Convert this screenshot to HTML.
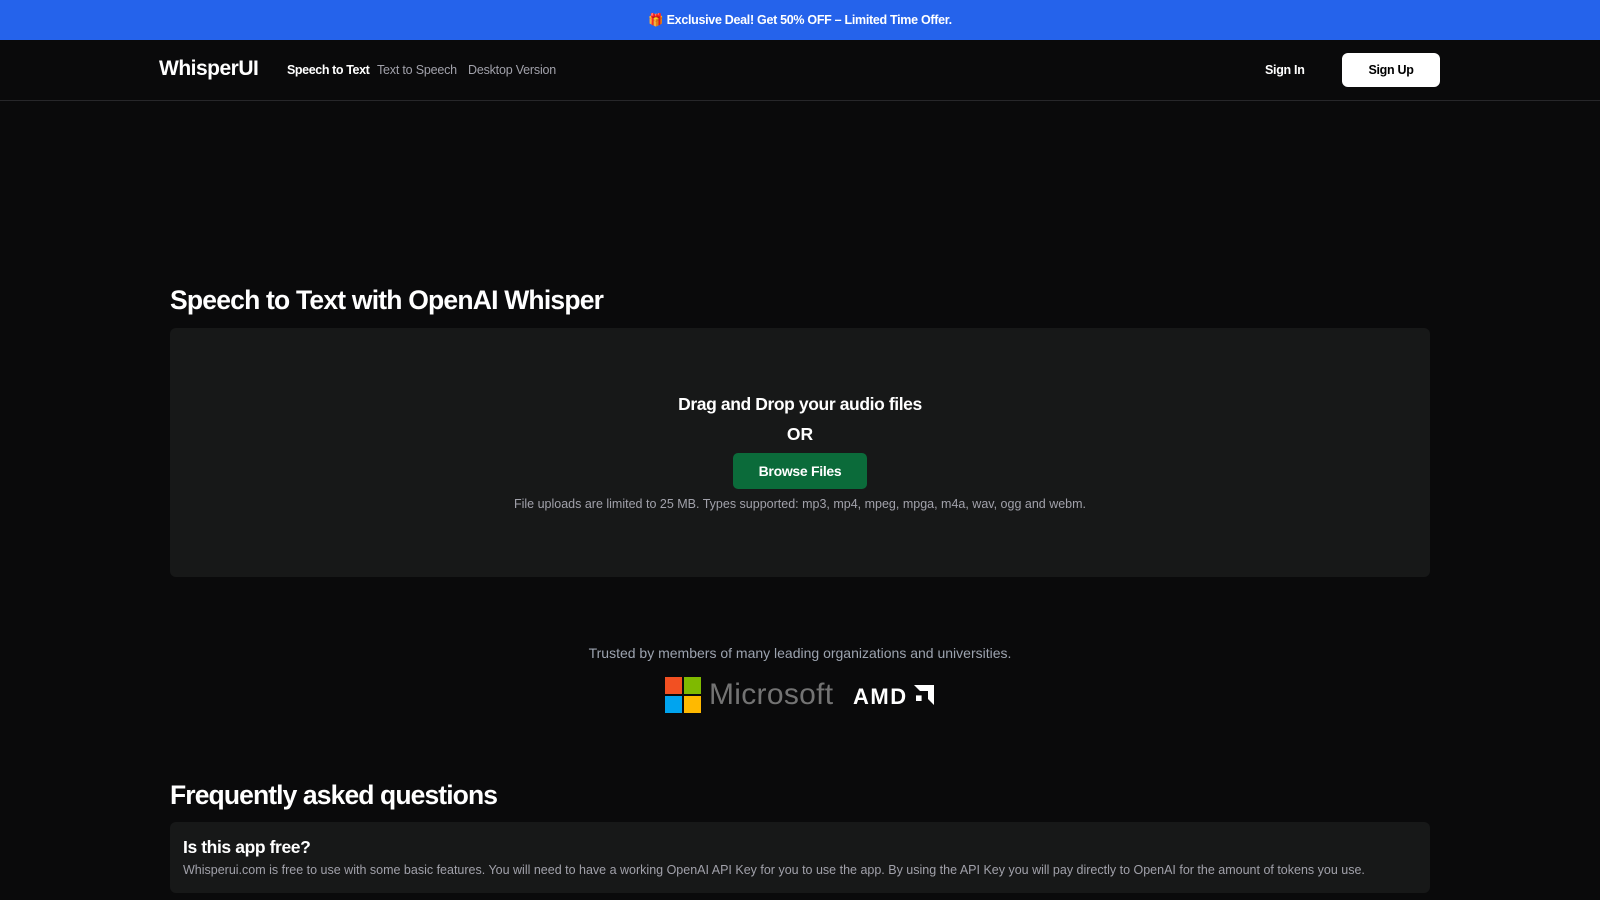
<!DOCTYPE html>
<html><head><meta charset="utf-8"><style>
*{margin:0;padding:0;box-sizing:border-box}
body{width:1600px;height:900px;overflow:hidden;background:#0a0a0b;font-family:"Liberation Sans",Arial,sans-serif;color:#fff;position:relative}
.banner{position:absolute;left:0;top:0;width:1600px;height:40px;background:#2563eb;text-align:center;line-height:40px;font-size:12.5px;font-weight:bold;letter-spacing:-0.3px}
.nav{position:absolute;top:40px;left:0;width:1600px;height:61px;border-bottom:1px solid #27272a}
.abs{position:absolute;white-space:nowrap}
.box{position:absolute;left:170px;width:1260px;background:#171818;border-radius:6px}
</style></head><body>
<div class="banner">🎁 Exclusive Deal! Get 50% OFF – Limited Time Offer.</div>
<div class="nav">
 <div class="abs" style="left:159px;top:17px;font-size:21px;font-weight:bold;letter-spacing:-0.5px">WhisperUI</div>
 <div class="abs" style="left:287px;top:23px;font-size:12.5px;font-weight:bold;letter-spacing:-0.4px">Speech to Text</div>
 <div class="abs" style="left:377px;top:23px;font-size:12.5px;color:#a1a1aa;letter-spacing:-0.2px">Text to Speech</div>
 <div class="abs" style="left:468px;top:23px;font-size:12.5px;color:#a1a1aa;letter-spacing:-0.2px">Desktop Version</div>
 <div class="abs" style="left:1265px;top:23px;font-size:12.5px;font-weight:bold;letter-spacing:-0.3px">Sign In</div>
 <div class="abs" style="left:1342px;top:13px;width:98px;height:34px;background:#fff;border-radius:6px;color:#000;font-size:12.5px;font-weight:bold;text-align:center;line-height:34px;letter-spacing:-0.3px">Sign Up</div>
</div>
<div class="abs" style="left:170px;top:285px;font-size:26.5px;font-weight:bold;letter-spacing:-0.8px">Speech to Text with OpenAI Whisper</div>
<div class="box" style="top:328px;height:249px"></div>
<div class="abs" style="left:0;width:1600px;text-align:center;top:394px;font-size:17.5px;font-weight:bold;letter-spacing:-0.4px">Drag and Drop your audio files</div>
<div class="abs" style="left:0;width:1600px;text-align:center;top:424px;font-size:17.5px;font-weight:bold">OR</div>
<div class="abs" style="left:733px;top:453px;width:134px;height:36px;background:#0b6b3a;border-radius:5px;text-align:center;line-height:36px;font-size:14px;font-weight:bold;letter-spacing:-0.3px">Browse Files</div>
<div class="abs" style="left:0;width:1600px;text-align:center;top:497px;font-size:12.5px;color:#a1a1aa">File uploads are limited to 25 MB. Types supported: mp3, mp4, mpeg, mpga, m4a, wav, ogg and webm.</div>
<div class="abs" style="left:0;width:1600px;text-align:center;top:645px;font-size:14px;color:#9ca3af">Trusted by members of many leading organizations and universities.</div>
<svg class="abs" style="left:665px;top:677px" width="36" height="36"><rect x="0" y="0" width="17" height="17" fill="#f25022"/><rect x="19" y="0" width="17" height="17" fill="#7fba00"/><rect x="0" y="19" width="17" height="17" fill="#00a4ef"/><rect x="19" y="19" width="17" height="17" fill="#ffb900"/></svg>
<div class="abs" style="left:709px;top:678px;font-size:30px;color:#737373;letter-spacing:0.3px">Microsoft</div>
<div class="abs" style="left:853px;top:684px;font-size:22px;font-weight:900;letter-spacing:1.5px">AMD</div>
<svg class="abs" style="left:914px;top:685px" width="20" height="20"><path d="M0 0H20V20L14 14V6H6Z" fill="#fff"/><path d="M5 8L12 8V15H5Z" fill="#fff" transform="translate(-2 4) scale(0.8)"/></svg>
<div class="abs" style="left:170px;top:780px;font-size:26.5px;font-weight:bold;letter-spacing:-0.9px">Frequently asked questions</div>
<div class="box" style="top:822px;height:71px"></div>
<div class="abs" style="left:183px;top:837px;font-size:17.5px;font-weight:bold;letter-spacing:-0.4px">Is this app free?</div>
<div class="abs" style="left:183px;top:863px;font-size:12.5px;color:#a1a1aa">Whisperui.com is free to use with some basic features. You will need to have a working OpenAI API Key for you to use the app. By using the API Key you will pay directly to OpenAI for the amount of tokens you use.</div>
</body></html>
